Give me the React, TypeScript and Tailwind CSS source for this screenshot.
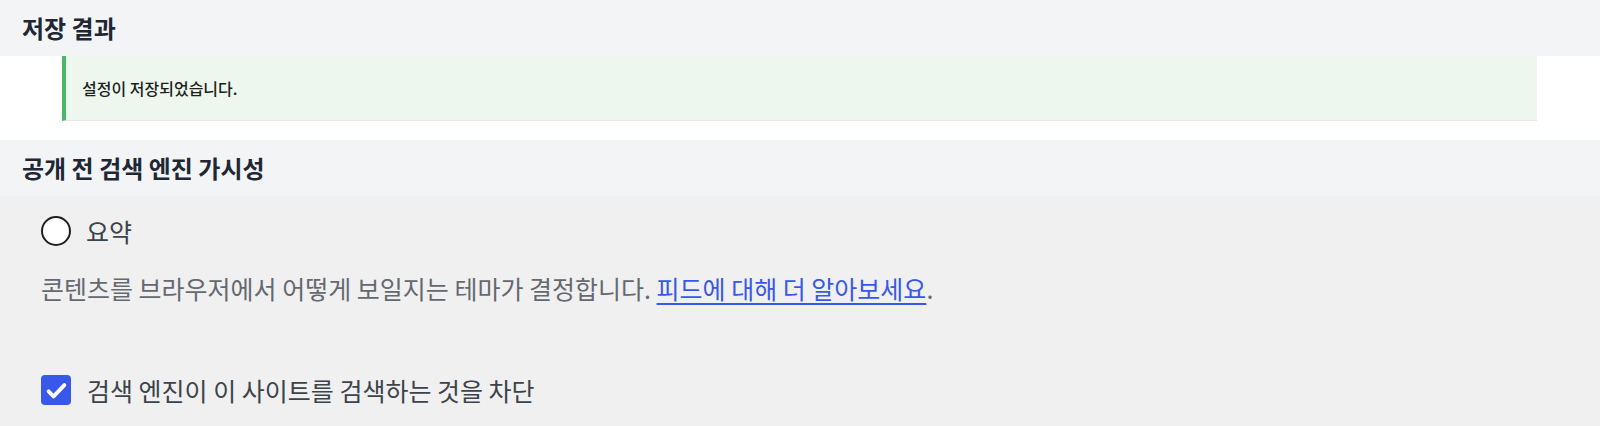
import React from 'react'

const font = { fontFamily: '"Noto Sans CJK KR", "Noto Sans", sans-serif' }

function SectionHeader({ title }: { title: string }) {
    return (
        <div className='h-14 flex items-center px-[22px] bg-[#f3f4f6]'>
            <h2 className='text-[24px] font-semibold text-[#1e2733]'>{title}</h2>
        </div>
    )
}

function CheckIcon() {
    return (
        <svg viewBox='0 0 24 24' className='h-[27px] w-[27px]' fill='none' stroke='white' strokeWidth={3.4} strokeLinecap='round' strokeLinejoin='round'>
            <path d='M5 12.8l4.4 4.4L19 7.2' />
        </svg>
    )
}

export default function App() {
    return (
        <div className='w-[1600px] h-[426px] overflow-hidden bg-white' style={font}>
            <SectionHeader title='저장 결과' />

            <div className='pb-[19px]'>
                <div className='ml-[62px] mr-[63px] h-[65px] flex items-center pl-4 border-l-4 border-[#4ab866] border-b border-b-[#e6e8ea] bg-[#edf7ee]'>
                    <p className='text-[16px] font-medium text-[#1e1e1e]'>설정이 저장되었습니다.</p>
                </div>
            </div>

            <SectionHeader title='공개 전 검색 엔진 가시성' />

            <div className='bg-[#f0f0f0] h-[230px] pl-[41px] pt-5'>
                <label className='flex items-center gap-[15px] h-[30px]'>
                    <span className='h-[30px] w-[30px] rounded-full border-2 border-[#1e1e1e] bg-white' />
                    <span className='text-[25px] leading-[30px] text-[#3c434a]'>요약</span>
                </label>

                <p className='mt-[25px] text-[25px] leading-[34px] text-[#646970]'>
                    콘텐츠를 브라우저에서 어떻게 보일지는 테마가 결정합니다.{' '}
                    <a href='#' className='text-[#3858e9] underline underline-offset-4'>피드에 대해 더 알아보세요</a>.
                </p>

                <label className='mt-[70px] flex items-center gap-[16px] h-[30px]'>
                    <span className='h-[30px] w-[30px] rounded-[4px] bg-[#3858e9] flex items-center justify-center'>
                        <CheckIcon />
                    </span>
                    <span className='text-[25px] leading-[30px] text-[#3c434a]'>검색 엔진이 이 사이트를 검색하는 것을 차단</span>
                </label>
            </div>
        </div>
    )
}
